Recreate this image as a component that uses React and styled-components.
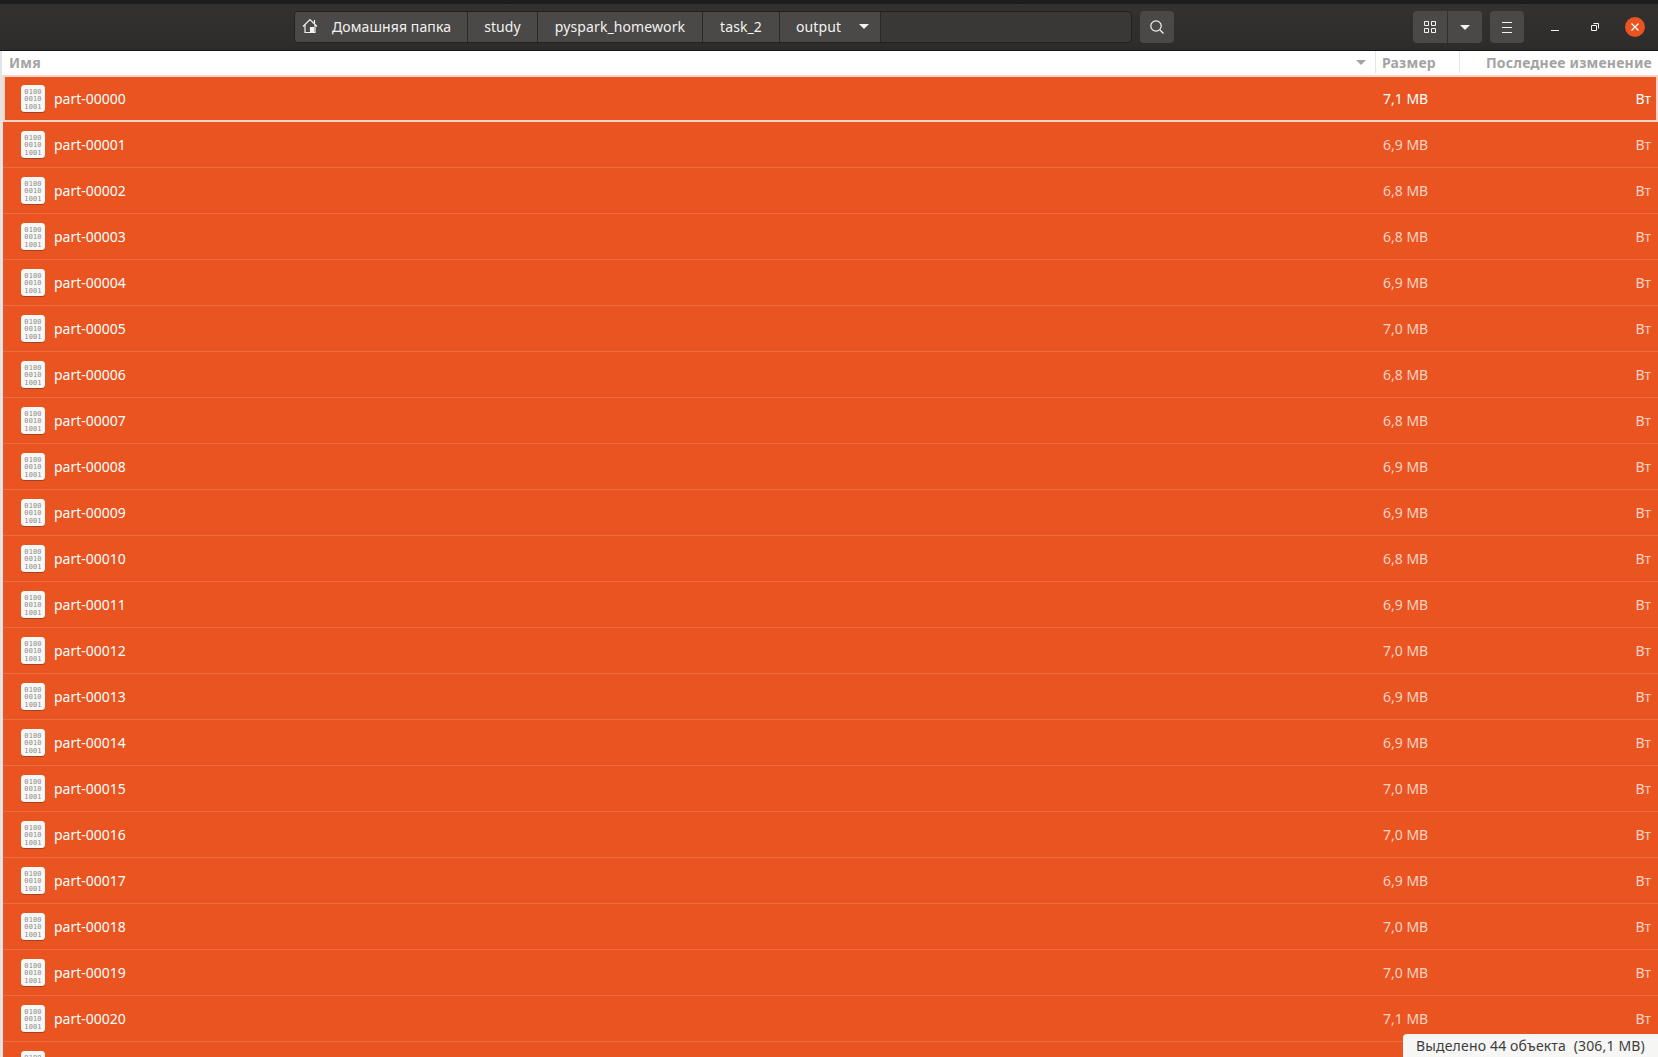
import React from 'react'
import styled, { createGlobalStyle } from 'styled-components'

const sizes = ['7,1','6,9','6,8','6,8','6,9','7,0','6,8','6,8','6,9','6,9','6,8','6,9','7,0','6,9','6,9','7,0','7,0','6,9','7,0','7,0','7,1','7,0']
const crumbs = ['study', 'pyspark_homework', 'task_2']

const Global = createGlobalStyle`
  html, body { margin: 0; padding: 0; background: #e95420; overflow: hidden; }
  * { box-sizing: border-box; }
`

const Window = styled.div`
  position: relative;
  width: 1658px;
  height: 1057px;
  overflow: hidden;
  display: flex;
  flex-direction: column;
  font-family: "Noto Sans", sans-serif;
  font-size: 14px;
  background: #e95420;
`
const TopEdge = styled.div`
  height: 4px;
  background: #1d1d1d;
  flex: none;
`
const HeaderBar = styled.header`
  height: 47px;
  flex: none;
  display: flex;
  align-items: flex-start;
  padding: 7px 0 0 294px;
  background: linear-gradient(#333231, #2d2c2b);
  border-bottom: 1px solid #161616;
  color: #f2f2f0;
`
const PathBar = styled.nav`
  width: 838px;
  height: 32px;
  display: flex;
  background: #393837;
  border: 1px solid #222120;
  border-radius: 4px;
  overflow: hidden;
`
const Crumb = styled.div`
  flex: none;
  height: 100%;
  width: ${p => p.$w}px;
  padding-bottom: 2px;
  display: flex;
  align-items: center;
  justify-content: ${p => (p.$pad ? 'flex-start' : 'center')};
  padding-left: ${p => p.$pad || 0}px;
  gap: ${p => p.$gap || 0}px;
  background: #4a4947;
  border-right: 1px solid #2a2928;
  letter-spacing: 0.1px;
  white-space: nowrap;
`
const IconButton = styled.button`
  flex: none;
  width: ${p => p.$w || 34}px;
  height: 32px;
  margin-left: ${p => p.$ml || 0}px;
  padding: 0;
  display: flex;
  align-items: center;
  justify-content: center;
  background: #4a4947;
  color: #f2f2f0;
  border: none;
  border-radius: ${p => p.$radius || '4px'};
`
const WindowButton = styled.div`
  flex: none;
  width: ${p => p.$w}px;
  height: 32px;
  margin-left: ${p => p.$ml}px;
  display: flex;
  align-items: center;
  justify-content: center;
  color: #f2f2f0;
`
const CloseDot = styled.div`
  width: 20px;
  height: 20px;
  border-radius: 50%;
  background: #e95420;
  display: flex;
  align-items: center;
  justify-content: center;
`
const ColumnHeader = styled.div`
  height: 24px;
  flex: none;
  padding-bottom: 2px;
  display: flex;
  background: #fff;
  border-left: 2px solid #e4e4e4;
  color: #a3a3a3;
  font-weight: 700;
  letter-spacing: 0.2px;
`
const NameColumn = styled.div`
  width: 1373px;
  padding: 0 9px 0 7px;
  display: flex;
  align-items: center;
  justify-content: space-between;
  box-shadow: 1px 0 0 #e4e4e4;
`
const SizeColumn = styled.div`
  width: 84px;
  padding-left: 7px;
  display: flex;
  align-items: center;
  box-shadow: 1px 0 0 #e4e4e4;
`
const DateColumn = styled.div`
  flex: 1;
  padding-right: 6px;
  display: flex;
  align-items: center;
  justify-content: flex-end;
  white-space: nowrap;
`
const List = styled.div`
  flex: 1;
  min-height: 0;
  border-left: 3px solid #e8e3e0;
`
const Row = styled.div`
  height: ${p => (p.$focused ? 47 : 46)}px;
  display: flex;
  align-items: center;
  background: #e95420;
  color: #fff;
  border-bottom: 1px solid #ec6d42;
  ${p => p.$focused && `
    border: 2px solid #f8d4c6;
  `}
`
const Name = styled.div`
  width: 1366px;
  padding-left: ${p => (p.$focused ? '15px' : '17px')};
  display: flex;
  align-items: center;
  gap: 8px;
`
const Size = styled.div`
  width: 120px;
  padding-left: ${p => (p.$focused ? '12px' : '14px')};
  color: ${p => (p.$focused ? '#fff' : '#f9d3c5')};
`
const Modified = styled.div`
  flex: 1;
  padding-right: ${p => (p.$focused ? '5px' : '7px')};
  text-align: right;
  color: ${p => (p.$focused ? '#fff' : '#f9d3c5')};
`
const Status = styled.div`
  position: absolute;
  right: 0;
  bottom: 0;
  width: 255px;
  height: 23px;
  padding-left: 13px;
  display: flex;
  align-items: center;
  background: #f6f6f5;
  border-top-left-radius: 4px;
  color: #3d3d3d;
  letter-spacing: 0.17px;
  white-space: pre;
`

const Caret = ({ color = '#f2f2f0', w = 10 }) => (
  <svg width={w} height="5" viewBox="0 0 10 5"><path d="M0 0h10L5 5z" fill={color} /></svg>
)

const HomeIcon = () => (
  <svg width="16" height="16" viewBox="0 0 16 16" fill="none" stroke="currentColor" strokeWidth="1.2">
    <path d="M1 8.5 8 1.5 15 8.5" />
    <path d="M3 7v7.5h10V7" />
    <path d="M8.5 9.5h3v5h-3z" fill="currentColor" />
    <path d="M12.5 2v3.5" />
  </svg>
)

const BinaryFile = () => (
  <svg width="26" height="30" viewBox="0 0 26 30" style={{ flex: 'none' }}>
    <rect x="1" y="2" width="24" height="27" rx="3.5" fill="#a8401a" />
    <rect x="1" y="1" width="24" height="27" rx="3.5" fill="#f7f7f6" />
    <g fontFamily="'DejaVu Sans Mono', monospace" fontSize="6.9" letterSpacing="0.2" fill="#8a8a8a" textAnchor="middle">
      <text x="13" y="9.5">0100</text>
      <text x="13" y="17">0010</text>
      <text x="13" y="24.5">1001</text>
    </g>
  </svg>
)

export default function App() {
  return (
    <Window>
      <Global />
      <TopEdge />
      <HeaderBar>
        <PathBar>
          <Crumb $pad={7} $gap={14} $w={173}><HomeIcon />Домашняя папка</Crumb>
          <Crumb $w={70}>{crumbs[0]}</Crumb>
          <Crumb $w={165}>{crumbs[1]}</Crumb>
          <Crumb $w={77}>{crumbs[2]}</Crumb>
          <Crumb $pad={16} $gap={18} $w={101}>output<Caret /></Crumb>
        </PathBar>
        <IconButton $ml={8}>
          <svg width="16" height="16" viewBox="0 0 16 16" fill="none" stroke="currentColor" strokeWidth="1.2">
            <circle cx="7" cy="7" r="5.2" /><path d="M11 11l3.5 3.5" />
          </svg>
        </IconButton>
        <IconButton $ml={239} $radius="4px 0 0 4px">
          <svg width="12" height="12" viewBox="0 0 12 12" fill="none" stroke="currentColor">
            <path d="M.5.5h4v4h-4zM7.5.5h4v4h-4zM.5 7.5h4v4h-4zM7.5 7.5h4v4h-4z" />
          </svg>
        </IconButton>
        <IconButton $ml={1} $radius="0 4px 4px 0"><Caret /></IconButton>
        <IconButton $ml={8}>
          <svg width="12" height="11" viewBox="0 0 12 11" stroke="currentColor">
            <path d="M1 .5h10M1 5.5h10M1 10.5h10" />
          </svg>
        </IconButton>
        <WindowButton $w={20} $ml={21}>
          <svg width="8" height="8" viewBox="0 0 8 8" stroke="currentColor"><path d="M0 7.5h8" /></svg>
        </WindowButton>
        <WindowButton $w={20} $ml={20}>
          <svg width="8" height="8" viewBox="0 0 8 8" fill="none" stroke="currentColor">
            <path d="M.5 2.5h5v5h-5zM2.5.5h5v5" strokeWidth="1" />
          </svg>
        </WindowButton>
        <WindowButton $w={20} $ml={20}>
          <CloseDot>
            <svg width="8" height="8" viewBox="0 0 8 8" stroke="#fff" strokeWidth="1.3"><path d="M.5.5l7 7M7.5.5l-7 7" /></svg>
          </CloseDot>
        </WindowButton>
      </HeaderBar>
      <ColumnHeader>
        <NameColumn>Имя <Caret color="#a3a3a3" /></NameColumn>
        <SizeColumn>Размер</SizeColumn>
        <DateColumn>Последнее изменение</DateColumn>
      </ColumnHeader>
      <List>
        {sizes.map((size, i) => (
          <Row key={i} $focused={i === 0}>
            <Name $focused={i === 0}>
              <BinaryFile />
              part-{String(i).padStart(5, '0')}
            </Name>
            <Size $focused={i === 0}>{size} MB</Size>
            <Modified $focused={i === 0}>Вт</Modified>
          </Row>
        ))}
      </List>
      <Status>Выделено 44 объекта  (306,1 MB)</Status>
    </Window>
  )
}
